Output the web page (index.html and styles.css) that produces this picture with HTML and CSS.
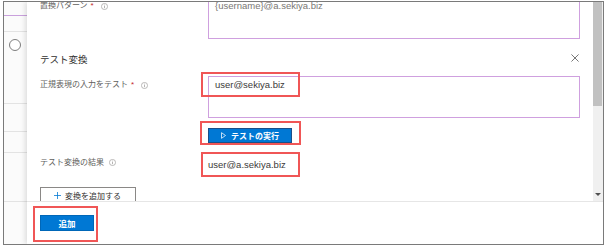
FILE: index.html
```html
<!DOCTYPE html>
<html lang="ja">
<head>
<meta charset="utf-8">
<link rel="stylesheet" href="styles.css">
</head>
<body>
<div class="frame">
  <div class="strip">
    <div class="srow s1"></div>
    <div class="srow s2"></div>
    <div class="srow s3"><span class="radio"></span></div>
    <div class="srow s4"></div>
    <div class="srow s5"></div>
    <div class="srow s6"></div>
  </div>
  <div class="panel">
    <div class="scrollarea">
      <div class="content">
        <div class="field f1">
          <div class="label">置換パターン<span class="req">*</span><svg class="info" viewBox="0 0 10 10"><circle cx="5" cy="5" r="4.4" fill="none" stroke="#8a8886" stroke-width="0.8"/><line x1="5" y1="4.2" x2="5" y2="7.4" stroke="#8a8886" stroke-width="0.9"/><circle cx="5" cy="2.8" r="0.6" fill="#8a8886"/></svg></div>
          <div class="control"><div class="textarea muted">{username}@a.sekiya.biz</div></div>
        </div>
        <div class="section-head">
          <span class="heading">テスト変換</span>
          <svg class="close" viewBox="0 0 9 9"><path d="M0.5 0.5 L8.5 8.5 M8.5 0.5 L0.5 8.5" stroke="#666" stroke-width="1" fill="none"/></svg>
        </div>
        <div class="field f2">
          <div class="label">正規表現の入力をテスト<span class="req">*</span><svg class="info" viewBox="0 0 10 10"><circle cx="5" cy="5" r="4.4" fill="none" stroke="#8a8886" stroke-width="0.8"/><line x1="5" y1="4.2" x2="5" y2="7.4" stroke="#8a8886" stroke-width="0.9"/><circle cx="5" cy="2.8" r="0.6" fill="#8a8886"/></svg></div>
          <div class="control anno">
            <div class="textarea">user@sekiya.biz</div>
            <div class="redbox rb-input"></div>
          </div>
        </div>
        <div class="field f3">
          <div class="label"></div>
          <div class="control">
            <div class="anno inline">
              <button class="btn primary test"><svg class="play" viewBox="0 0 6 8"><path d="M0.6 0.6 L5.4 4 L0.6 7.4 Z" fill="none" stroke="#fff" stroke-width="0.9"/></svg>テストの実行</button>
              <div class="redbox rb-btn"></div>
            </div>
          </div>
        </div>
        <div class="field f4">
          <div class="label">テスト変換の結果<svg class="info" viewBox="0 0 10 10"><circle cx="5" cy="5" r="4.4" fill="none" stroke="#8a8886" stroke-width="0.8"/><line x1="5" y1="4.2" x2="5" y2="7.4" stroke="#8a8886" stroke-width="0.9"/><circle cx="5" cy="2.8" r="0.6" fill="#8a8886"/></svg></div>
          <div class="control">
            <div class="anno inline">
              <div class="result">user@a.sekiya.biz</div>
              <div class="redbox rb-result"></div>
            </div>
          </div>
        </div>
        <div class="addrow">
          <button class="btn outline"><svg class="plus" viewBox="0 0 8 8"><path d="M4 0 V8 M0 4 H8" stroke="#0078d4" stroke-width="0.9" fill="none"/></svg>変換を追加する</button>
        </div>
      </div>
      <div class="scrollbar">
        <div class="thumb"></div>
        <div class="track"></div>
        <div class="arrow"></div>
      </div>
    </div>
    <div class="footer">
      <div class="anno inline">
        <button class="btn primary add">追加</button>
        <div class="redbox rb-add"></div>
      </div>
    </div>
  </div>
</div>
</body>
</html>
```

FILE: styles.css
```css
* { box-sizing: border-box; }
html, body { margin: 0; padding: 0; background: #fff; }
body {
  font-family: "Liberation Sans", "Noto Sans CJK JP", sans-serif;
  color: #323130;
  width: 605px;
  height: 248px;
  overflow: hidden;
}
.frame {
  margin: 1px 0 0 3px;
  width: 601px;
  height: 244px;
  border: 1px solid #7a7a7a;
  display: flex;
  overflow: hidden;
}
.strip {
  width: 23px;
  flex: none;
  background: #fbfbfb;
  display: flex;
  flex-direction: column;
}
.srow { border-bottom: 1px solid #e3e3e3; flex: none; }
.s1 { height: 14px; border-bottom-color: #c9a0dc; }
.s2 { height: 16px; }
.s3 { height: 72px; padding: 7px 0 0 5px; }
.s4 { height: 28px; }
.s5 { height: 21px; }
.s6 { height: 49px; }
.radio {
  display: block;
  width: 12px;
  height: 12px;
  border: 1px solid #7d7d7d;
  border-radius: 50%;
  background: #fff;
}
.panel {
  width: 576px;
  flex: none;
  display: flex;
  flex-direction: column;
  background: #fff;
  box-shadow: -2px 0 5px rgba(0,0,0,0.12);
  position: relative;
}
.scrollarea {
  height: 199px;
  display: flex;
  overflow: hidden;
}
.content {
  width: 566px;
  padding: 0 13px;
  overflow: hidden;
}
.field {
  display: grid;
  grid-template-columns: 168px 1fr;
}
.label {
  font-size: 8px;
  line-height: 12px;
  padding-top: 3px;
  color: #605e5c;
  display: flex;
  align-items: center;
  height: 15px;
  white-space: nowrap;
}
.req { color: #c4262c; margin-left: 3px; font-size: 8px; }
.info { width: 7px; height: 7px; margin-left: 7px; flex: none; }
.f4 .info { margin-left: 5px; }
.textarea {
  height: 42px;
  border: 1px solid #cfa0df;
  padding: 2px 6px;
  font-size: 9.5px;
  line-height: 12px;
  color: #3b3a39;
}
.textarea.muted { color: #797775; }
.f1 { margin-top: -5px; }
.section-head {
  margin-top: 14px;
  height: 14px;
  display: flex;
  justify-content: space-between;
}
.heading { font-size: 9.5px; line-height: 14px; color: #323130; }
.close { width: 8px; height: 8px; margin: 1px 1px 0 0; }
.f2 { margin-top: 9px; }
.anno { position: relative; }
.anno.inline { display: inline-block; vertical-align: top; }
.redbox {
  position: absolute;
  border: 2px solid #f05656;
  pointer-events: none;
}
.rb-input { left: -7px; top: -4px; width: 99px; height: 25px; }
.f3 { margin-top: 10px; }
.f3 .label { height: 15px; }
.btn {
  font-family: inherit;
  margin: 0;
  padding: 0;
  display: flex;
  align-items: center;
  justify-content: center;
  cursor: default;
}
.btn.primary {
  background: #0078d4;
  color: #fff;
  font-weight: bold;
  font-size: 8px;
  border: 1px solid #0067b8;
}
.btn.test {
  width: 84px;
  height: 15px;
  border-color: #1b4f88;
}
.play { width: 5px; height: 7px; margin-right: 5px; }
.rb-btn { left: -8px; top: -7px; width: 101px; height: 24px; }
.f4 { margin-top: 6px; }
.f4 .label { padding-top: 5px; height: 25px; align-items: flex-start; line-height: 12px; }
.f4 .label .info { margin-top: 2px; }
.result {
  height: 25px;
  font-size: 9.5px;
  line-height: 25px;
  color: #3b3a39;
  width: 91px;
}
.rb-result { left: -7px; top: 0; width: 99px; height: 25px; }
.addrow { margin-top: 10px; }
.btn.outline {
  width: 96px;
  height: 16px;
  background: #fff;
  border: 1px solid #8a8886;
  color: #323130;
  font-size: 8px;
  justify-content: flex-start;
  padding-left: 13px;
}
.plus { width: 7px; height: 7px; margin-right: 4px; }
.scrollbar {
  width: 10px;
  flex: none;
  background: #f0f0f0;
  display: flex;
  flex-direction: column;
}
.thumb { height: 104px; width: 9px; background: #c1c1c1; }
.track { flex: 1; }
.arrow {
  height: 0;
  width: 0;
  margin: 0 0 5px 2px;
  border-left: 3px solid transparent;
  border-right: 3px solid transparent;
  border-top: 3px solid #505050;
}
.footer {
  border-top: 1px solid #e6e6e6;
  height: 43px;
  padding: 13px 0 0 13px;
}
.btn.add {
  width: 54px;
  height: 16px;
  font-size: 8.5px;
}
.rb-add { left: -7px; top: -9px; width: 65px; height: 36px; }
```
